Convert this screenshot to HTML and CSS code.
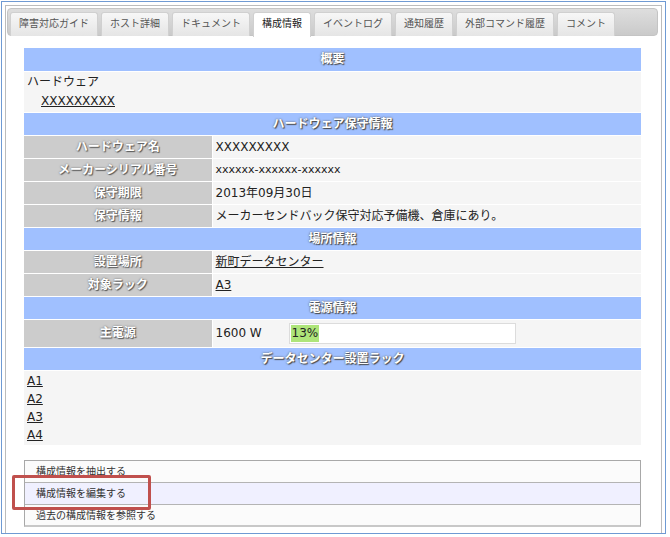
FILE: index.html
```html
<!DOCTYPE html>
<html lang="ja">
<head>
<meta charset="utf-8">
<link rel="stylesheet" href="styles.css">
</head>
<body>
<div class="frame">
  <div class="panel">
    <div class="tabbar">
      <div class="tab">障害対応ガイド</div>
      <div class="tab">ホスト詳細</div>
      <div class="tab">ドキュメント</div>
      <div class="tab active">構成情報</div>
      <div class="tab">イベントログ</div>
      <div class="tab">通知履歴</div>
      <div class="tab">外部コマンド履歴</div>
      <div class="tab">コメント</div>
    </div>
    <div class="content">
      <table class="info">
        <colgroup><col class="c1"><col class="c2"></colgroup>
        <tr><th colspan="2" class="head">概要</th></tr>
        <tr><td colspan="2" class="summary">
          <div>ハードウェア</div>
          <div class="indent"><a href="#">XXXXXXXXX</a></div>
        </td></tr>
        <tr><th colspan="2" class="head">ハードウェア保守情報</th></tr>
        <tr><th class="label">ハードウェア名</th><td class="val">XXXXXXXXX</td></tr>
        <tr><th class="label">メーカーシリアル番号</th><td class="val small">xxxxxx-xxxxxx-xxxxxx</td></tr>
        <tr><th class="label">保守期限</th><td class="val">2013年09月30日</td></tr>
        <tr><th class="label">保守情報</th><td class="val">メーカーセンドバック保守対応予備機、倉庫にあり。</td></tr>
        <tr><th colspan="2" class="head">場所情報</th></tr>
        <tr><th class="label">設置場所</th><td class="val"><a href="#">新町データセンター</a></td></tr>
        <tr><th class="label">対象ラック</th><td class="val"><a href="#">A3</a></td></tr>
        <tr><th colspan="2" class="head">電源情報</th></tr>
        <tr class="power"><th class="label">主電源</th><td class="val">
          <div class="powerrow"><span class="watt">1600 W</span>
            <div class="bar"><div class="fill" style="width:13%">13%</div></div>
          </div>
        </td></tr>
        <tr><th colspan="2" class="head">データセンター設置ラック</th></tr>
        <tr><td colspan="2" class="racks">
          <div><a href="#">A1</a></div>
          <div><a href="#">A2</a></div>
          <div><a href="#">A3</a></div>
          <div><a href="#">A4</a></div>
        </td></tr>
      </table>
      <div class="menu-wrap">
        <ul class="menu">
          <li>構成情報を抽出する</li>
          <li class="hover">構成情報を編集する</li>
          <li>過去の構成情報を参照する</li>
        </ul>
        <div class="highlight"></div>
      </div>
    </div>
  </div>
</div>
</body>
</html>
```
FILE: styles.css
```css
* { box-sizing: border-box; }
html, body { margin: 0; padding: 0; background: #fff; }
body {
  font-family: "DejaVu Sans", "Noto Sans CJK JP", sans-serif;
  font-size: 12px;
  color: #222;
}
.frame {
  margin: 1px 0 0 1px;
  width: 665px;
  height: 533px;
  border: 1px solid #6f9ad3;
  padding: 3px 3px 0 3px;
  overflow: hidden;
}
.panel {
  border: 1px solid #bcbcbc;
  height: 600px;
  padding: 2px 3px 0 1px;
}
.tabbar {
  display: flex;
  gap: 3px;
  height: 28px;
  padding: 3px 0 0 2px;
  background: linear-gradient(#dedede, #cacaca);
  border: 1px solid #c4c4c4;
  border-radius: 4px;
}
.tab {
  height: 24px;
  padding: 0 8px;
  line-height: 22px;
  font-size: 10px;
  color: #555;
  background: linear-gradient(#f7f7f7, #e5e5e5);
  border: 1px solid #d0d0d0;
  border-bottom: none;
  border-radius: 3px 3px 0 0;
  white-space: nowrap;
}
.tab.active {
  background: #fff;
  color: #222;
  height: 25px;
}
.content {
  padding: 12px 17px 0 17px;
}
.info {
  width: 617px;
  border-collapse: collapse;
  table-layout: fixed;
}
.c1 { width: 188px; }
.info th, .info td {
  padding: 0;
  border-bottom: 1px solid #fff;
}
.head {
  height: 23px;
  background: #a0c0ff;
  color: #fff;
  font-weight: bold;
  font-size: 12px;
  text-shadow: 0 0 2px #555, 1px 1px 1px #444;
  text-align: center;
  line-height: 16px;
}
.summary {
  background: #f5f5f5;
  padding: 1px 3px 1px 3px !important;
  line-height: 19px;
  height: 39px;
}
.indent { padding-left: 14px; }
.label {
  height: 23px;
  background: #cccccc;
  color: #fff;
  font-weight: bold;
  text-shadow: 0 0 2px #666, 1px 1px 1px #555;
  text-align: center;
  border-right: 1px solid #fff;
  line-height: 16px;
}
.val {
  background: #f5f5f5;
  padding-left: 3px !important;
  line-height: 16px;
}
.val.small { font-size: 11px; }
a { color: #222; text-decoration: underline; }
.power .label, .power .val { height: 28px; }
.powerrow {
  display: flex;
  align-items: center;
}
.watt { width: 73px; }
.bar {
  width: 227px;
  height: 21px;
  border: 1px solid #dcdcdc;
  background: #fff;
  padding: 1px;
}
.fill {
  height: 17px;
  background: #aee57a;
  line-height: 17px;
  padding-left: 1px;
  font-size: 12px;
}
.racks {
  background: #f5f5f5;
  padding: 1px 3px 1px 3px !important;
  line-height: 18px;
  height: 75px;
}
.menu-wrap {
  position: relative;
  margin-top: 14px;
}
.menu {
  list-style: none;
  margin: 0;
  padding: 0;
  width: 617px;
  border: 1px solid #a8a8a8;
  border-bottom: 2px solid #c8c8c8;
  font-family: "Noto Sans CJK JP", sans-serif;
}
.menu li {
  height: 22px;
  line-height: 20px;
  padding-left: 11px;
  font-size: 10px;
  color: #333;
  background: #fbfbfb;
  border-bottom: 1px solid #b4b4b4;
}
.menu li:last-child { border-bottom: none; height: 20px; }
.menu li.hover { background: #f0f0ff; }
.highlight {
  position: absolute;
  left: -12px;
  top: 15px;
  width: 139px;
  height: 35px;
  border: 3px solid #c0504d;
  border-radius: 2px;
}
```
